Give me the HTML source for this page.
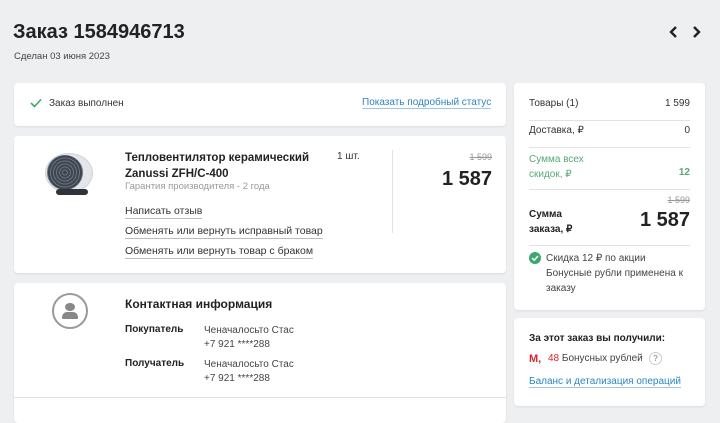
<!DOCTYPE html>
<html><head><meta charset="utf-8"><style>
*{margin:0;padding:0;box-sizing:border-box}
body{width:720px;height:413px;overflow:hidden;background:#eeeff1;font-family:"Liberation Sans",sans-serif;color:#222;position:relative}
.a{position:absolute;white-space:nowrap}
.card{position:absolute;background:#fff;border-radius:4px;box-shadow:0 1px 2px rgba(0,0,0,.08)}
.u{border-bottom:1px solid #bbb;padding-bottom:1px}
.hr{position:absolute;height:1px;background:#e2e2e2}
.s{font-size:10.5px;color:#333}
</style></head><body>
<div class="a" style="left:13px;top:21px;font-size:20px;font-weight:bold;color:#222">Заказ 1584946713</div>
<div class="a" style="left:14px;top:51px;font-size:9.5px;color:#444">Сделан 03 июня 2023</div>
<svg class="a" style="left:668px;top:25px" width="36" height="14" viewBox="0 0 36 14"><path d="M8 2 L3 7 L8 12" stroke="#222" stroke-width="2.4" fill="none"/><path d="M26 2 L31 7 L26 12" stroke="#222" stroke-width="2.4" fill="none"/></svg>

<div class="card" style="left:14px;top:83px;width:492px;height:43px">
<svg class="a" style="left:16px;top:15px" width="12" height="10"><path d="M1 5 L4.5 8.5 L11 1.5" stroke="#3aa76d" stroke-width="1.6" fill="none"/></svg>
<div class="a" style="left:35px;top:15px;font-size:10px;color:#333">Заказ выполнен</div>
<div class="a" style="left:348px;top:14px;font-size:10px;color:#2e86c1"><span style="border-bottom:1px solid #9cc6e6">Показать подробный статус</span></div>
</div>

<div class="card" style="left:14px;top:136px;width:492px;height:137px">
<div class="a" style="left:31px;top:17px;width:48px;height:40px;border-radius:50%;background:#e4e6e9;border:1px solid #cfd2d6"></div>
<div class="a" style="left:33px;top:19px;width:36px;height:35px;border-radius:50%;background:repeating-radial-gradient(circle at 50% 50%,#3e4652 0 2px,#6a7380 2px 3px)"></div>
<div class="a" style="left:42px;top:53px;width:32px;height:6px;border-radius:3px;background:#2f343b"></div>
<div class="a" style="left:111px;top:14px;font-size:11.5px;font-weight:bold;line-height:16px">Тепловентилятор керамический<br>Zanussi ZFH/C-400</div>
<div class="a" style="left:111px;top:45px;font-size:9.5px;color:#999">Гарантия производителя - 2 года</div>
<div class="a s" style="left:111px;top:69px"><span class="u">Написать отзыв</span></div>
<div class="a s" style="left:111px;top:89px"><span class="u">Обменять или вернуть исправный товар</span></div>
<div class="a s" style="left:111px;top:109px"><span class="u">Обменять или вернуть товар с браком</span></div>
<div class="a" style="left:323px;top:15px;font-size:10px;color:#333">1 шт.</div>
<div class="a" style="left:378px;top:14px;width:1px;height:83px;background:#e2e2e2"></div>
<div class="a" style="right:14px;top:16px;font-size:9px;color:#999;text-decoration:line-through">1 599</div>
<div class="a" style="right:14px;top:32px;font-size:20px;font-weight:bold">1 587</div>
</div>

<div class="card" style="left:14px;top:283px;width:492px;height:140px">
<div class="a" style="left:38px;top:10px;width:36px;height:36px;border-radius:50%;border:2px solid #999"></div>
<div class="a" style="left:51px;top:20px;width:10px;height:8px;border-radius:50%;background:#888"></div>
<div class="a" style="left:48px;top:29px;width:16px;height:7px;border-radius:5px 5px 1px 1px;background:#888"></div>
<div class="a" style="left:111px;top:14px;font-size:12px;font-weight:bold">Контактная информация</div>
<div class="a" style="left:111px;top:41px;font-size:10px;font-weight:bold">Покупатель</div>
<div class="a" style="left:190px;top:41px;font-size:10px;color:#444;line-height:14px">Ченачалосьто Стас<br>+7 921 ****288</div>
<div class="a" style="left:111px;top:75px;font-size:10px;font-weight:bold">Получатель</div>
<div class="a" style="left:190px;top:75px;font-size:10px;color:#444;line-height:14px">Ченачалосьто Стас<br>+7 921 ****288</div>
<div class="hr" style="left:0;top:114px;width:492px"></div>
</div>

<div class="card" style="left:514px;top:83px;width:191px;height:227px">
<div class="a" style="left:15px;top:15px;font-size:10px;color:#333">Товары (1)</div>
<div class="a" style="right:15px;top:15px;font-size:10px;color:#333">1 599</div>
<div class="hr" style="left:15px;top:37px;width:161px"></div>
<div class="a" style="left:15px;top:42px;font-size:10px;color:#333">Доставка, ₽</div>
<div class="a" style="right:15px;top:42px;font-size:10px;color:#333">0</div>
<div class="hr" style="left:15px;top:64px;width:161px"></div>
<div class="a" style="left:15px;top:69px;font-size:10px;color:#5aa878;line-height:15px">Сумма всех<br>скидок, ₽</div>
<div class="a" style="right:15px;top:84px;font-size:10px;color:#5aa878;font-weight:bold">12</div>
<div class="hr" style="left:15px;top:106px;width:161px"></div>
<div class="a" style="right:15px;top:112px;font-size:9px;color:#999;text-decoration:line-through">1 599</div>
<div class="a" style="left:15px;top:124px;font-size:10px;font-weight:bold;line-height:15px">Сумма<br>заказа, ₽</div>
<div class="a" style="right:15px;top:126px;font-size:20px;font-weight:bold">1 587</div>
<div class="hr" style="left:15px;top:162px;width:161px"></div>
<svg class="a" style="left:15px;top:169px" width="12" height="12"><circle cx="6" cy="6" r="6" fill="#3aa76d"/><path d="M3 6 L5.2 8.2 L9 4" stroke="#fff" stroke-width="1.5" fill="none"/></svg>
<div class="a" style="left:32px;top:168px;font-size:10px;color:#444;line-height:15px">Скидка 12 ₽ по акции<br>Бонусные рубли применена к<br>заказу</div>
</div>

<div class="card" style="left:514px;top:318px;width:191px;height:88px">
<div class="a" style="left:15px;top:15px;font-size:10px;font-weight:bold">За этот заказ вы получили:</div>
<div class="a" style="left:15px;top:35px;font-size:11px;font-weight:bold;color:#d9262c">M,</div>
<div class="a" style="left:34px;top:35px;font-size:10px;color:#444"><span style="color:#d9262c">48</span> Бонусных рублей</div>
<div class="a" style="left:135px;top:34px;width:13px;height:13px;border-radius:50%;border:1px solid #ccc;font-size:8px;text-align:center;line-height:11px;color:#777">?</div>
<div class="a" style="left:15px;top:58px;font-size:10px;color:#2e86c1"><span style="border-bottom:1px solid #9cc6e6">Баланс и детализация операций</span></div>
</div>
</body></html>
